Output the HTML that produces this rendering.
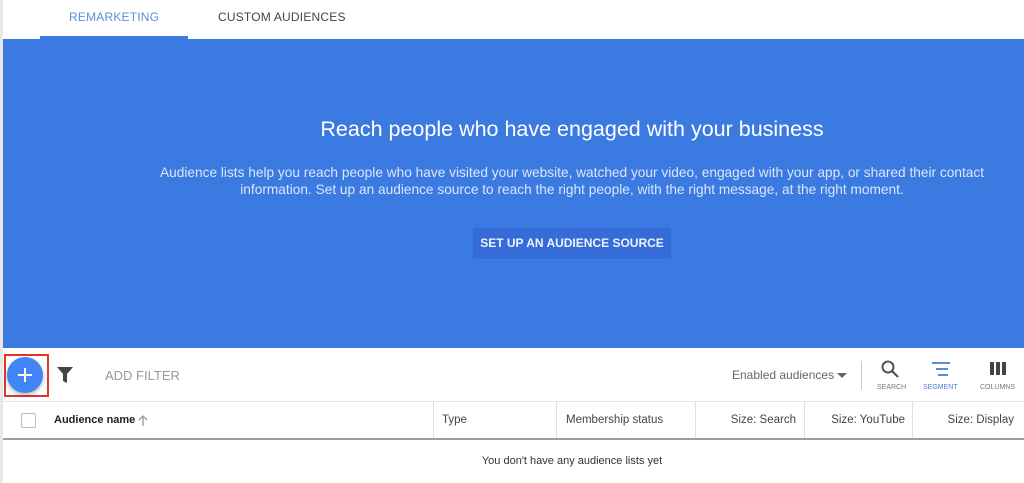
<!DOCTYPE html>
<html><head><style>
*{margin:0;padding:0;box-sizing:border-box}
body{width:1024px;height:483px;overflow:hidden;background:#fff;font-family:"Liberation Sans",Arial,sans-serif;position:relative;color:#333}
.abs{position:absolute;white-space:nowrap}
.leftb{position:absolute;left:0;top:0;width:3px;height:483px;background:#e8e8e8}
.tab{position:absolute;top:10px;font-size:12px;letter-spacing:0.2px}
.blue{position:absolute;left:3px;top:39px;width:1021px;height:309px;background:#3b7be1}
h1{position:absolute;left:0;width:1144px;top:117px;text-align:center;font-weight:normal;color:#fff;font-size:21.5px;white-space:nowrap}
.p{position:absolute;left:0;width:1144px;top:164px;text-align:center;color:#dbe6fa;font-size:13.7px;line-height:17px;white-space:nowrap}
.btn{position:absolute;left:473px;top:228px;width:198px;height:31px;background:#356cd7;color:#eef3fd;font-size:12px;font-weight:bold;text-align:center;line-height:31px;white-space:nowrap}
.col{position:absolute;top:401px;height:38px;border-left:1px solid #e0e0e0;font-size:11.5px;line-height:38px;color:#444;white-space:nowrap}
</style></head><body>
<div class="leftb"></div>
<div class="tab" style="left:69px;color:#5a8fd8">REMARKETING</div>
<div class="tab" style="left:218px;color:#444">CUSTOM AUDIENCES</div>
<div class="abs" style="left:40px;top:36px;width:148px;height:3px;background:#3b7be1"></div>
<div class="blue"></div>
<h1>Reach people who have engaged with your business</h1>
<div class="p">Audience lists help you reach people who have visited your website, watched your video, engaged with your app, or shared their contact<br>information. Set up an audience source to reach the right people, with the right message, at the right moment.</div>
<div class="btn">SET UP AN AUDIENCE SOURCE</div>

<div class="abs" style="left:4px;top:354px;width:45px;height:43px;border:2px solid #e0352b"></div>
<div class="abs" style="left:7px;top:357px;width:36px;height:36px;border-radius:50%;background:#4285f4;box-shadow:0 2px 4px rgba(0,0,0,.3)"></div>
<svg class="abs" style="left:18px;top:368px" width="14" height="14"><path d="M7 0V14M0 7H14" stroke="#fff" stroke-width="2"/></svg>
<svg class="abs" style="left:57px;top:367px" width="16" height="16" viewBox="0 0 16 16"><path d="M0 0H16L10 7V16L6 14V7Z" fill="#444"/></svg>
<div class="abs" style="left:105px;top:368px;font-size:13px;color:#999">ADD FILTER</div>
<div class="abs" style="left:732px;top:368px;font-size:12px;color:#666">Enabled audiences</div>
<svg class="abs" style="left:837px;top:373px" width="10" height="5"><path d="M0 0H10L5 5Z" fill="#666"/></svg>
<div class="abs" style="left:861px;top:361px;width:1px;height:29px;background:#ccc"></div>
<svg class="abs" style="left:881px;top:360px" width="18" height="18" viewBox="0 0 18 18"><circle cx="7" cy="7" r="5.5" fill="none" stroke="#555" stroke-width="2"/><path d="M11 11L17 17" stroke="#555" stroke-width="2.2"/></svg>
<div class="abs" style="left:877px;top:384px;font-size:7px;color:#777">SEARCH</div>
<svg class="abs" style="left:932px;top:362px" width="18" height="14"><path d="M0 1H18M4 7H16M6 13H16" stroke="#5a8fd8" stroke-width="2"/></svg>
<div class="abs" style="left:923px;top:384px;font-size:7px;color:#4a7fd0">SEGMENT</div>
<svg class="abs" style="left:990px;top:362px" width="16" height="13"><rect x="0" y="0" width="4" height="13" fill="#444"/><rect x="6" y="0" width="4" height="13" fill="#444"/><rect x="12" y="0" width="4" height="13" fill="#444"/></svg>
<div class="abs" style="left:980px;top:384px;font-size:7px;color:#777">COLUMNS</div>

<div class="abs" style="left:3px;top:401px;width:1021px;height:1px;background:#e6e6e6"></div>
<div class="abs" style="left:21px;top:413px;width:15px;height:15px;border:1.5px solid #bbb;border-radius:2px"></div>
<div class="abs" style="left:54px;top:414px;font-size:11px;font-weight:bold;color:#222">Audience name</div>
<svg class="abs" style="left:138px;top:415px" width="10" height="11"><path d="M5 11V1M1 5L5 1L9 5" fill="none" stroke="#999" stroke-width="1.3"/></svg>
<div class="col" style="left:433px;width:123px;padding-left:8px">Type</div>
<div class="col" style="left:556px;width:139px;padding-left:9px">Membership status</div>
<div class="col" style="left:695px;width:109px;text-align:right;padding-right:8px">Size: Search</div>
<div class="col" style="left:804px;width:108px;text-align:right;padding-right:7px">Size: YouTube</div>
<div class="col" style="left:912px;width:112px;text-align:right;padding-right:10px">Size: Display</div>
<div class="abs" style="left:3px;top:438px;width:1021px;height:2px;background:#9e9e9e"></div>
<div class="abs" style="left:0;width:1144px;top:455px;text-align:center;font-size:11px;color:#333">You don't have any audience lists yet</div>
</body></html>
